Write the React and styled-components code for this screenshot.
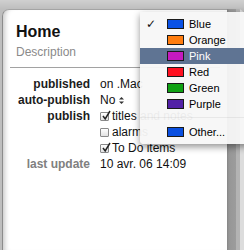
import React from 'react'
import styled, { createGlobalStyle } from 'styled-components'

const GlobalStyle = createGlobalStyle`
  html, body {
    margin: 0;
    padding: 0;
  }
  body {
    width: 244px;
    height: 250px;
    overflow: hidden;
    background: #c4c4c4;
    font-family: "Liberation Sans", Arial, sans-serif;
  }
`

const Screen = styled.div`
  position: relative;
  width: 244px;
  height: 250px;
  box-sizing: border-box;
  padding-top: 9px;
  display: flex;
  overflow: hidden;
  background: linear-gradient(#d0d0d0, #bebebe 9px);
`

const Panel = styled.div`
  flex: 1;
  margin-left: 2px;
  background: #fff;
  border-top: 1px solid #a4a4a4;
  border-left: 1px solid #8c8c8c;
  border-top-left-radius: 7px;
  box-shadow: inset 6px 0 5px -4px rgba(0, 0, 0, 0.22);
`

const Rail = styled.div`
  width: 17px;
  border-top-right-radius: 6px;
  background: linear-gradient(
    to right,
    #858585 0,
    #969696 2px,
    #9c9c9c 9px,
    #b3b3b3 9px,
    #b3b3b3 13px,
    #dcdcdc 13px
  );
`

const Header = styled.div`
  padding: 13px 13px 0;
`

const Title = styled.div`
  font-size: 16px;
  line-height: 18px;
  font-weight: bold;
  color: #111;
`

const Subtitle = styled.div`
  margin-top: 4px;
  font-size: 12px;
  line-height: 15px;
  color: #8a8a8a;
`

const Divider = styled.div`
  height: 1px;
  margin: 7px 7px 0;
  background: #a2a2a2;
`

const Fields = styled.div`
  display: grid;
  grid-template-columns: 74px 1fr;
  grid-auto-rows: 16px;
  column-gap: 10px;
  margin-top: 8px;
  padding-left: 13px;
  font-size: 12px;
  line-height: 16px;
`

const Label = styled.div`
  text-align: right;
  font-weight: bold;
  white-space: nowrap;
  color: ${p => (p.$muted ? '#808080' : '#1c1c1c')};
`

const Value = styled.div`
  display: flex;
  align-items: center;
  gap: 3px;
  white-space: nowrap;
  color: #111;
`

const Box = styled.span`
  width: 9px;
  height: 9px;
  box-sizing: border-box;
  border: 1px solid #8a8a8a;
  border-radius: 1px;
  background: linear-gradient(#ffffff, #e2e2e2);
  flex-shrink: 0;
  position: relative;

  svg {
    position: absolute;
    left: 0;
    top: -3px;
  }
`

const Menu = styled.div`
  position: absolute;
  top: 12px;
  left: 140px;
  width: 112px;
  padding: 4px 0;
  background: rgba(247, 247, 247, 0.95);
  border-radius: 0 0 4px 4px;
  box-shadow: 0 3px 7px rgba(0, 0, 0, 0.42);
  font-size: 11px;
`

const Item = styled.div`
  display: grid;
  grid-template-columns: 22px 17px 1fr;
  column-gap: 5px;
  align-items: center;
  height: 16px;
  color: ${p => (p.$active ? '#fff' : '#000')};
  background: ${p => (p.$active ? '#5f7493' : 'transparent')};
`

const Check = styled.span`
  padding-left: 6px;
  font-family: "DejaVu Sans", sans-serif;
  font-size: 12px;
  font-weight: bold;
  color: #111;
`

const Swatch = styled.span`
  width: 17px;
  height: 10px;
  box-sizing: border-box;
  border: 1px solid #1a1a1a;
  background: ${p => p.$color};
`

const Separator = styled.div`
  height: 1px;
  margin: 5px 0 6px;
  background: rgba(0, 0, 0, 0.06);
`

const Tick = () => (
  <svg width="11" height="11" viewBox="0 0 11 11">
    <path d="M2 6 L4.2 9 L9 1" fill="none" stroke="#222" strokeWidth="1.5" />
  </svg>
)

const Stepper = () => (
  <svg width="5" height="9" viewBox="0 0 5 9" style={{ marginLeft: 1 }}>
    <path d="M0 3.5 L2.5 1 L5 3.5 Z" fill="#333" />
    <path d="M0 5.5 L2.5 8 L5 5.5 Z" fill="#333" />
  </svg>
)

const CheckBox = ({ checked }) => <Box>{checked && <Tick />}</Box>

const colors = [
  { name: 'Blue', color: '#0a52e6', checked: true },
  { name: 'Orange', color: '#ff7d0f' },
  { name: 'Pink', color: '#c51ac0', active: true },
  { name: 'Red', color: '#ff1020' },
  { name: 'Green', color: '#10a214' },
  { name: 'Purple', color: '#5221a6' }
]

const App = () => {
  return (
    <>
      <GlobalStyle />
      <Screen>
        <Panel>
          <Header>
            <Title>Home</Title>
            <Subtitle>Description</Subtitle>
          </Header>
          <Divider />
          <Fields>
            <Label>published</Label>
            <Value>on .Mac</Value>

            <Label>auto-publish</Label>
            <Value>No<Stepper /></Value>

            <Label>publish</Label>
            <Value><CheckBox checked />titles and notes</Value>

            <Label />
            <Value><CheckBox />alarms</Value>

            <Label />
            <Value><CheckBox checked />To Do items</Value>

            <Label $muted>last update</Label>
            <Value>10 avr. 06 14:09</Value>
          </Fields>
        </Panel>
        <Rail />

        <Menu>
          {colors.map(c => (
            <Item key={c.name} $active={c.active}>
              <Check>{c.checked ? '✓' : ''}</Check>
              <Swatch $color={c.color} />
              <span>{c.name}</span>
            </Item>
          ))}
          <Separator />
          <Item>
            <Check />
            <Swatch $color="#0a4fe0" />
            <span>Other...</span>
          </Item>
        </Menu>
      </Screen>
    </>
  )
}

export default App
